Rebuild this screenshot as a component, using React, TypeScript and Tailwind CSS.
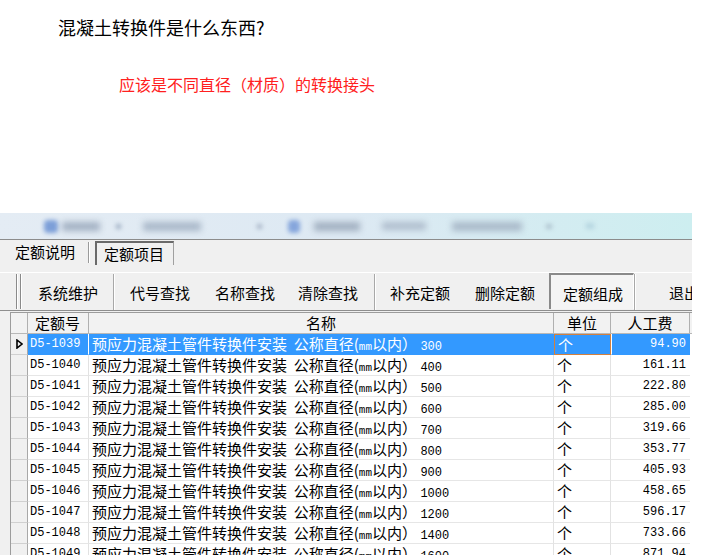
import { useState } from "react";

const rows = [
  { code: "D5-1039", size: "300", price: "94.90" },
  { code: "D5-1040", size: "400", price: "161.11" },
  { code: "D5-1041", size: "500", price: "222.80" },
  { code: "D5-1042", size: "600", price: "285.00" },
  { code: "D5-1043", size: "700", price: "319.66" },
  { code: "D5-1044", size: "800", price: "353.77" },
  { code: "D5-1045", size: "900", price: "405.93" },
  { code: "D5-1046", size: "1000", price: "458.65" },
  { code: "D5-1047", size: "1200", price: "596.17" },
  { code: "D5-1048", size: "1400", price: "733.66" },
  { code: "D5-1049", size: "1600", price: "871.94" },
];

const tools = ["系统维护", "代号查找", "名称查找", "清除查找", "补充定额", "删除定额"];

const cjk = "font-['Noto_Sans_CJK_SC','Noto_Sans_CJK_JP',sans-serif]";
const mono = "font-['Liberation_Mono',monospace]";

const Sep = () => (
  <div className="flex shrink-0 h-[36px] self-center">
    <div className="w-px bg-[#a8a8a8]" />
    <div className="w-px bg-white" />
  </div>
);

const App = () => {
  const [selected] = useState<number>(0);

  return (
    <div className={`w-[723px] h-[555px] bg-white overflow-hidden ${cjk}`}>
      {/* 问题 */}
      <div className="pt-[16px] pl-[58px] text-[18px] leading-[22px] text-black">
        混凝土转换件是什么东西?
      </div>
      <div className="mt-[36px] pl-[119px] text-[16px] leading-[20px] text-[#ff2020]">
        应该是不同直径（材质）的转换接头
      </div>

      {/* 截图窗口 */}
      <div className="mt-[119px] w-[692px] h-[400px] bg-[#f0f0f0]">
        {/* 模糊的任务栏 */}
        <div className="h-[27px] border-b border-[#8c8c8c] bg-gradient-to-r from-[#e4ecf4] via-[#dde9f3] to-[#cdeef0] flex items-center overflow-hidden">
          <div className="shrink-0 ml-[44px] w-[14px] h-[13px] rounded-sm bg-[#7d9fd8] blur-[2px]" />
          <div className="shrink-0 ml-[4px] w-[38px] h-[9px] bg-[#a3b1c3] blur-[3px]" />
          <div className="shrink-0 ml-[16px] w-[5px] h-[5px] bg-[#a0b0c4] blur-[2px]" />
          <div className="shrink-0 ml-[22px] w-[58px] h-[9px] bg-[#a9b8c9] blur-[3px]" />
          <div className="shrink-0 ml-[56px] w-[5px] h-[5px] bg-[#a8b6c8] blur-[2px]" />
          <div className="shrink-0 ml-[26px] w-[12px] h-[13px] rounded-sm bg-[#86a6dc] blur-[2px]" />
          <div className="shrink-0 ml-[14px] w-[46px] h-[9px] bg-[#a2b0c1] blur-[3px]" />
          <div className="shrink-0 ml-[22px] w-[44px] h-[8px] bg-[#afbdcd] blur-[3px]" />
          <div className="shrink-0 ml-[26px] w-[70px] h-[9px] bg-[#a9b9c9] blur-[3px]" />
          <div className="shrink-0 ml-[24px] w-[6px] h-[5px] bg-[#b0c4d0] blur-[2px]" />
          <div className="shrink-0 ml-[34px] w-[8px] h-[6px] bg-[#b6d6e0] blur-[2px]" />
        </div>

        {/* 标签 */}
        <div className="h-[25px] flex items-stretch text-[15px] text-black">
          <div className="pl-[15px] w-[88px] flex items-center">定额说明</div>
          <div className="w-px my-[2px] bg-[#9a9a9a]" />
          <div className="w-px my-[2px] bg-white" />
          <div className="ml-[5px] mt-[1px] w-[79px] border-l-2 border-t-2 border-r border-l-[#6a6a6a] border-t-[#6a6a6a] border-r-[#a0a0a0] flex items-center pl-[7px]">
            定额项目
          </div>
        </div>

        {/* 工具栏 */}
        <div className="mt-[7px] h-[39px] border-t border-white border-b border-b-[#8e8e8e] flex items-center overflow-hidden text-[15px] text-black">
          <div className="shrink-0 ml-[16px] flex h-[35px] gap-[2px]">
            <div className="flex">
              <div className="w-px bg-[#8a8a8a]" />
              <div className="w-px bg-white" />
            </div>
            <div className="flex">
              <div className="w-px bg-[#8a8a8a]" />
              <div className="w-px bg-white" />
            </div>
          </div>
          <div className="shrink-0 ml-[16px] w-[75px] pt-[4px]">{tools[0]}</div>
          <Sep />
          <div className="shrink-0 ml-[15px] w-[85px] pt-[4px]">{tools[1]}</div>
          <div className="shrink-0 w-[83px] pt-[4px]">{tools[2]}</div>
          <div className="shrink-0 w-[76px] pt-[4px]">{tools[3]}</div>
          <Sep />
          <div className="shrink-0 ml-[14px] w-[85px] pt-[4px]">{tools[4]}</div>
          <div className="shrink-0 w-[74px] pt-[4px]">{tools[5]}</div>
          <div className="shrink-0 w-[85px] h-[36px] self-end mb-px border-l-2 border-t-2 border-r border-l-[#8a8a8a] border-t-[#8a8a8a] border-r-white bg-[#f4f4f4] flex items-center pl-[12px] pt-[5px]">
            定额组成
          </div>
          <Sep />
          <div className="shrink-0 ml-[33px] whitespace-nowrap pt-[4px]">退出</div>
        </div>

        {/* 表格 */}
        <div className="pl-[10px] mt-px">
          <div className="border-l border-t border-[#9c9c9c] bg-white">
            <div className="h-[21px] flex bg-[#f2f2f2] border-b border-[#b8b8b8] text-[15px] leading-[20px] text-black">
              <div className="w-[17px] border-r border-[#b0b0b0]" />
              <div className="w-[61px] border-r border-[#b0b0b0] pl-[7px]">定额号</div>
              <div className="w-[465px] border-r border-[#b0b0b0] text-center">名称</div>
              <div className="w-[57px] border-r border-[#b0b0b0] text-center">单位</div>
              <div className="w-[79px] border-r border-[#b0b0b0] text-center">人工费</div>
            </div>
            {rows.map((r, i) => {
              const sel = i === selected;
              return (
                <div key={r.code} className={`h-[21px] flex text-[15px] leading-[20px] ${sel ? "text-white" : "text-black"}`}>
                  <div className="w-[17px] bg-[#f0f0f0] border-r border-b border-r-[#a8a8a8] border-b-[#d0d0d0] flex items-center justify-center">
                    {sel && (
                      <svg width="7" height="10" viewBox="0 0 7 10">
                        <path d="M1 1 L6 5 L1 9 Z" fill="none" stroke="#000" strokeWidth="1.6" />
                      </svg>
                    )}
                  </div>
                  <div className={`w-[61px] border-r border-b pl-[2px] ${mono} text-[12px] leading-[21px] ${sel ? "bg-[#3399ff] border-r-white border-b-[#3399ff]" : "border-r-[#e2e2e2] border-b-[#e6e6e6]"}`}>
                    {r.code}
                  </div>
                  <div className={`w-[465px] border-r border-b pl-[3px] whitespace-pre ${sel ? "bg-[#3399ff] border-r-[#3399ff] border-b-[#3399ff]" : "border-r-[#e2e2e2] border-b-[#e6e6e6]"}`}>
                    预应力混凝土管件转换件安装  公称直径(<span className={`${mono} text-[11px]`}>mm</span>以内） <span className={`${mono} text-[12px]`}>{r.size}</span>
                  </div>
                  <div className={`w-[57px] pl-[3px] ${sel ? "bg-[#3399ff] border border-[#d2803f]" : "border-r border-b border-r-[#e2e2e2] border-b-[#e6e6e6]"}`}>
                    个
                  </div>
                  <div className={`w-[79px] border-b text-right pr-[4px] ${mono} text-[12px] leading-[21px] ${sel ? "bg-[#3399ff] border-b-[#3399ff] border-l border-l-white" : "border-b-[#e6e6e6]"}`}>
                    {r.price}
                  </div>
                </div>
              );
            })}
          </div>
        </div>
      </div>
    </div>
  );
};

export default App;
